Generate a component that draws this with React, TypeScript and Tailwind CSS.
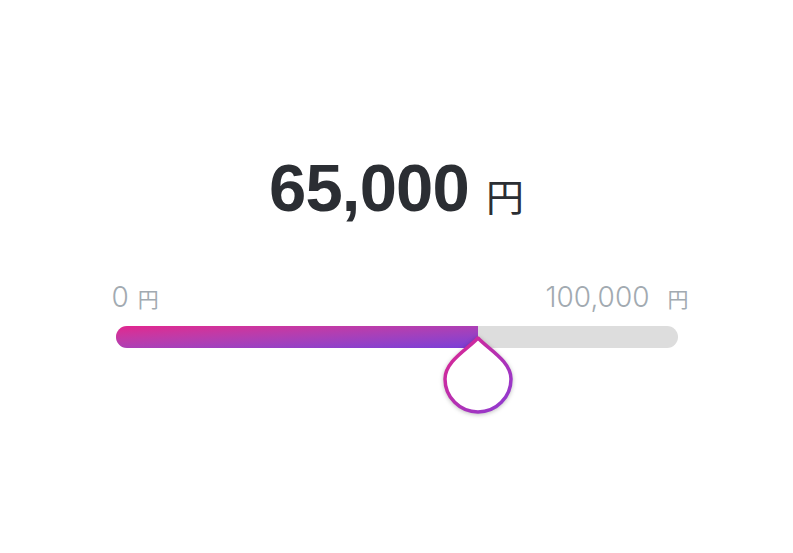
export default function App() {
  return (
    <div className="w-full h-[553px] bg-white flex flex-col items-center">
      <div className="mt-[154px] flex items-baseline text-[#2b2e33]">
        <span className="font-['Liberation_Sans',Arial,sans-serif] font-bold text-[67px] leading-none tracking-[-0.8px]">
          65,000
        </span>
        <span className="ml-[17px] font-['Noto_Sans_CJK_JP',sans-serif] font-normal text-[38px] leading-none">
          円
        </span>
      </div>

      <div className="w-[562px] mt-[62px]">
        <div className="-ml-[4px] -mr-[11px] flex justify-between items-baseline text-[#a2aab1]">
          <div className="flex items-baseline">
            <span className="font-['Inter',sans-serif] font-light text-[28px] leading-none">0</span>
            <span className="ml-[9px] font-['Noto_Sans_CJK_JP',sans-serif] font-normal text-[21px] leading-none">円</span>
          </div>
          <div className="flex items-baseline">
            <span className="font-['Inter',sans-serif] font-light text-[28px] leading-none">100,000</span>
            <span className="ml-[18px] font-['Noto_Sans_CJK_JP',sans-serif] font-normal text-[21px] leading-none">円</span>
          </div>
        </div>

        <div className="relative mt-[15px] h-[22px] rounded-full bg-[#dddddd]">
          <div className="h-full w-[362px] rounded-l-full bg-linear-to-br from-[#e2238e] to-[#7a3dd8]" />
          <svg
            className="absolute left-[326.5px] top-[8.5px] drop-shadow-[0_1px_2px_rgba(0,0,0,0.25)]"
            width="72"
            height="80"
            viewBox="-36 -44 72 80"
          >
            <defs>
              <linearGradient id="thumbStroke" x1="0" y1="0" x2="1" y2="1">
                <stop offset="0" stopColor="#e0258f" />
                <stop offset="1" stopColor="#8b3bd4" />
              </linearGradient>
            </defs>
            <path
              d="M0,-41 C10,-30 33,-18 33,0 A33,33 0 1,1 -33,0 C-33,-18 -10,-30 0,-41 Z"
              fill="#ffffff"
              stroke="url(#thumbStroke)"
              strokeWidth="3.5"
              strokeLinejoin="round"
            />
          </svg>
        </div>
      </div>
    </div>
  )
}
